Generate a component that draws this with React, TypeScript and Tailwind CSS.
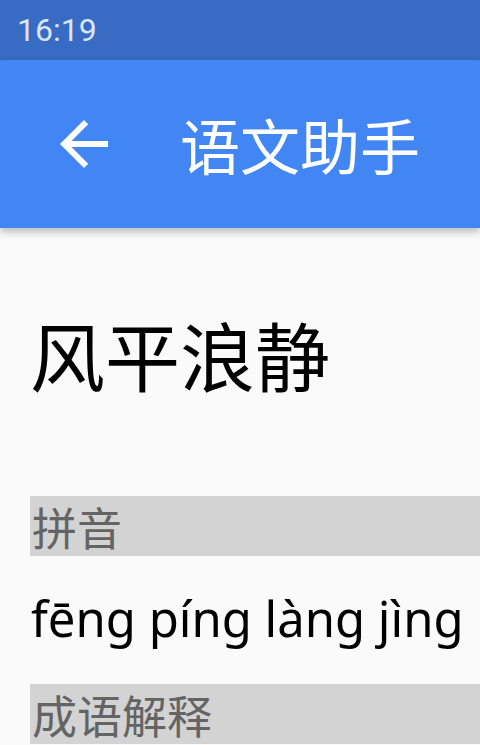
import React from "react";

export default function App() {
  return (
    <div className="w-[480px] h-[745px] bg-[#fafafa] overflow-hidden relative font-['Noto_Sans_CJK_SC','Noto_Sans',sans-serif]">
      <div className="h-[60px] bg-[#376bc4] flex items-center pl-[17px] text-[#dce5f5] text-[32px] leading-none font-['Roboto',sans-serif]">
        16:19
      </div>
      <div className="h-[168px] bg-[#4286f4] flex items-center shadow-[0_4px_8px_rgba(0,0,0,0.25)] relative z-10">
        <svg className="ml-[48px] w-[72px] h-[72px]" viewBox="0 0 24 24" fill="#ffffff">
          <path d="M20 11H7.83l5.59-5.59L12 4l-8 8 8 8 1.41-1.41L7.83 13H20v-2z" />
        </svg>
        <span className="ml-[60px] text-white text-[60px] leading-none">语文助手</span>
      </div>
      <div className="pl-[30px]">
        <div className="h-[268px] flex items-center pb-[18px] text-black text-[75px] leading-none">
          风平浪静
        </div>
        <div className="h-[60px] bg-[#d3d3d3] flex items-center pl-[2px] text-[#646464] text-[45px] leading-none">
          拼音
        </div>
        <div className="h-[128px] flex items-center pl-[1px] pb-[4px] text-black text-[49px] leading-none font-['Noto_Sans',sans-serif]">
          fēng píng làng jìng
        </div>
        <div className="h-[60px] bg-[#d3d3d3] flex items-center pl-[2px] text-[#646464] text-[45px] leading-none">
          成语解释
        </div>
      </div>
    </div>
  );
}
